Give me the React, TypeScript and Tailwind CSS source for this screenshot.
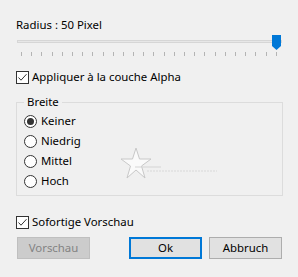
import React from "react";

const font = { fontFamily: '"Segoe UI", "Noto Sans", "Liberation Sans", sans-serif' };

function Check() {
  return (
    <span className="w-[13px] h-[13px] border border-[#333333] bg-white flex items-center justify-center shrink-0">
      <svg width="11" height="11" viewBox="0 0 11 11">
        <path d="M1.5 5.5 L4 8.2 L9.5 2.2" fill="none" stroke="#333333" strokeWidth="1" />
      </svg>
    </span>
  );
}

function Radio({ on }: { on?: boolean }) {
  return (
    <span className="w-[13px] h-[13px] rounded-full border border-[#333333] bg-white flex items-center justify-center shrink-0">
      {on && <span className="w-[7px] h-[7px] rounded-full bg-[#333333]" />}
    </span>
  );
}

export default function App() {
  const ticks = Array.from({ length: 26 });
  return (
    <div
      className="w-[298px] h-[277px] bg-[#f0f0f0] text-[11.4px] leading-[16px] text-black px-4 pt-[17px] flex flex-col"
      style={font}
    >
      <div>Radius : 50 Pixel</div>
      <div className="relative h-[24px] mt-[2px] ml-[1px] w-[265px]">
        <div className="absolute left-0 right-0 top-[5px] h-[3px] bg-[#e7e7e7] border border-[#d6d6d6]" />
        <svg className="absolute left-[255px] top-0" width="9" height="15" viewBox="0 0 9 15">
          <path d="M0 0 H9 V11 L4.5 15 L0 11 Z" fill="#0078d7" />
        </svg>
        <div className="absolute left-[4px] w-[256px] top-[17px] flex justify-between">
          {ticks.map((_, i) => (
            <span key={i} className="w-[1px] h-[4px] bg-[#b4b4b4]" />
          ))}
        </div>
      </div>
      <div className="flex items-center gap-[3px] mt-[10px]">
        <Check />
        <span>Appliquer à la couche Alpha</span>
      </div>
      <div className="relative mt-[17px] w-[267px] h-[94px] border border-[#dcdcdc]">
        <span className="absolute left-[7px] top-[-9px] px-[3px] bg-[#f0f0f0]">Breite</span>
        <div className="flex flex-col gap-[4px] pl-[7px] pt-[10px]">
          {[
            ["Keiner", true],
            ["Niedrig", false],
            ["Mittel", false],
            ["Hoch", false],
          ].map(([label, on]) => (
            <div key={label as string} className="flex items-center gap-[4px] h-[16px]">
              <Radio on={on as boolean} />
              <span>{label as string}</span>
            </div>
          ))}
        </div>
        <svg className="absolute left-[104px] top-[44px]" width="110" height="34" viewBox="0 0 110 34">
          <path
            d="M15 1 L18.5 12 L30 12 L20.5 19 L24 31 L15 23 L6 31 L9.5 19 L0 12 L11.5 12 Z"
            fill="#fafafa"
            stroke="#c8c8c8"
            strokeWidth="1"
          />
          <line x1="14" y1="20" x2="40" y2="20" stroke="#d4d4d4" strokeWidth="1" />
          <line x1="26" y1="24" x2="96" y2="24" stroke="#d8d8d8" strokeWidth="1" strokeDasharray="2 1" />
        </svg>
      </div>
      <div className="flex items-center gap-[3px] mt-[18px]">
        <Check />
        <span>Sofortige Vorschau</span>
      </div>
      <div className="flex mt-[7px] ml-[1px]">
        <div className="w-[73px] h-[22px] bg-[#cccccc] border border-[#bfbfbf] text-[#838383] flex items-center justify-center">
          Vorschau
        </div>
        <div className="w-[73px] h-[22px] ml-[39px] bg-[#e1e1e1] border-2 border-[#0078d7] flex items-center justify-center">
          Ok
        </div>
        <div className="w-[73px] h-[22px] ml-[7px] bg-[#e1e1e1] border border-[#adadad] flex items-center justify-center">
          Abbruch
        </div>
      </div>
    </div>
  );
}
